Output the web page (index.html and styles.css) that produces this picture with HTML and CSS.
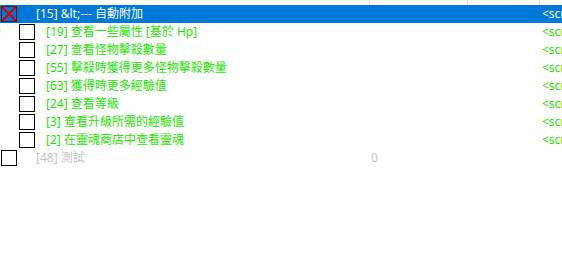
FILE: index.html
```html
<html lang="zh-Hant">

<head>
  <meta charset="utf-8">
  <title>Cheat Table</title>
  <link rel="stylesheet" href="styles.css">
</head>

<body>

  <div class="head">
    <div class="hcol c-name"></div>
    <div class="hcol c-value"></div>
    <div class="hcol c-type"><span class="tick">''</span></div>
    <div class="hcol c-script"></div>
  </div>

  <div class="list">
    <div class="row selected">
      <div class="c-name"><span class="box crossed"></span><span class="lbl">[15] &amp;lt;--- 自動附加</span></div>
      <div class="c-value"></div>
      <div class="c-type"></div>
      <div class="c-script">&lt;script&gt;</div>
    </div>
    <div class="row child">
      <div class="c-name"><span class="box"></span><span class="lbl">[19] 查看一些屬性 [基於 Hp]</span></div>
      <div class="c-value"></div>
      <div class="c-type"></div>
      <div class="c-script">&lt;script&gt;</div>
    </div>
    <div class="row child">
      <div class="c-name"><span class="box"></span><span class="lbl">[27] 查看怪物擊殺數量</span></div>
      <div class="c-value"></div>
      <div class="c-type"></div>
      <div class="c-script">&lt;script&gt;</div>
    </div>
    <div class="row child">
      <div class="c-name"><span class="box"></span><span class="lbl">[55] 擊殺時獲得更多怪物擊殺數量</span></div>
      <div class="c-value"></div>
      <div class="c-type"></div>
      <div class="c-script">&lt;script&gt;</div>
    </div>
    <div class="row child">
      <div class="c-name"><span class="box"></span><span class="lbl">[63] 獲得時更多經驗值</span></div>
      <div class="c-value"></div>
      <div class="c-type"></div>
      <div class="c-script">&lt;script&gt;</div>
    </div>
    <div class="row child">
      <div class="c-name"><span class="box"></span><span class="lbl">[24] 查看等級</span></div>
      <div class="c-value"></div>
      <div class="c-type"></div>
      <div class="c-script">&lt;script&gt;</div>
    </div>
    <div class="row child">
      <div class="c-name"><span class="box"></span><span class="lbl">[3] 查看升級所需的經驗值</span></div>
      <div class="c-value"></div>
      <div class="c-type"></div>
      <div class="c-script">&lt;script&gt;</div>
    </div>
    <div class="row child">
      <div class="c-name"><span class="box"></span><span class="lbl">[2] 在靈魂商店中查看靈魂</span></div>
      <div class="c-value"></div>
      <div class="c-type"></div>
      <div class="c-script">&lt;script&gt;</div>
    </div>
    <div class="row muted">
      <div class="c-name"><span class="box"></span><span class="lbl">[48] 測試</span></div>
      <div class="c-value">0</div>
      <div class="c-type"></div>
      <div class="c-script"></div>
    </div>
  </div>

</body>

</html>
```

FILE: styles.css
```css
body {
  margin: 0;
  padding: 0;
  background-color: #fff;
  font-family: 'Noto Sans', 'Noto Sans CJK TC', sans-serif;
  font-size: 12px;
  overflow: hidden;
}

.head,
.row {
  display: grid;
  grid-template-columns: 369px 98px 72px 1fr;
}

.head {
  height: 5px;
  overflow: hidden;
}

.hcol {
  border-left: 1px solid #e5e5e5;
}

.hcol.c-name {
  border-left: none;
}

.tick {
  display: block;
  margin: -9px 0 0 12px;
  color: #a07020;
  font-size: 10px;
}

.row {
  height: 18px;
  line-height: 18px;
  white-space: nowrap;
  color: #22e800;
}

.row > div {
  overflow: hidden;
}

.c-name {
  display: flex;
  align-items: center;
}

.c-value {
  padding-left: 2px;
}

.c-script {
  padding-left: 3px;
}

.box {
  flex: none;
  box-sizing: border-box;
  width: 16px;
  height: 16px;
  margin-left: 1px;
  border: 1px solid #000;
  background-color: #fff;
}

.lbl {
  margin-left: 19px;
}

.child .box {
  margin-left: 19px;
}

.child .lbl {
  margin-left: 11px;
}

.selected {
  background-color: #0078d7;
  color: #fff;
}

.crossed {
  border-color: #5a1010;
  background-color: #0078d7;
  background-image:
    linear-gradient(45deg, transparent 46%, #e00000 46%, #e00000 54%, transparent 54%),
    linear-gradient(-45deg, transparent 46%, #e00000 46%, #e00000 54%, transparent 54%);
}

.muted {
  color: #c4c4c4;
}
```
